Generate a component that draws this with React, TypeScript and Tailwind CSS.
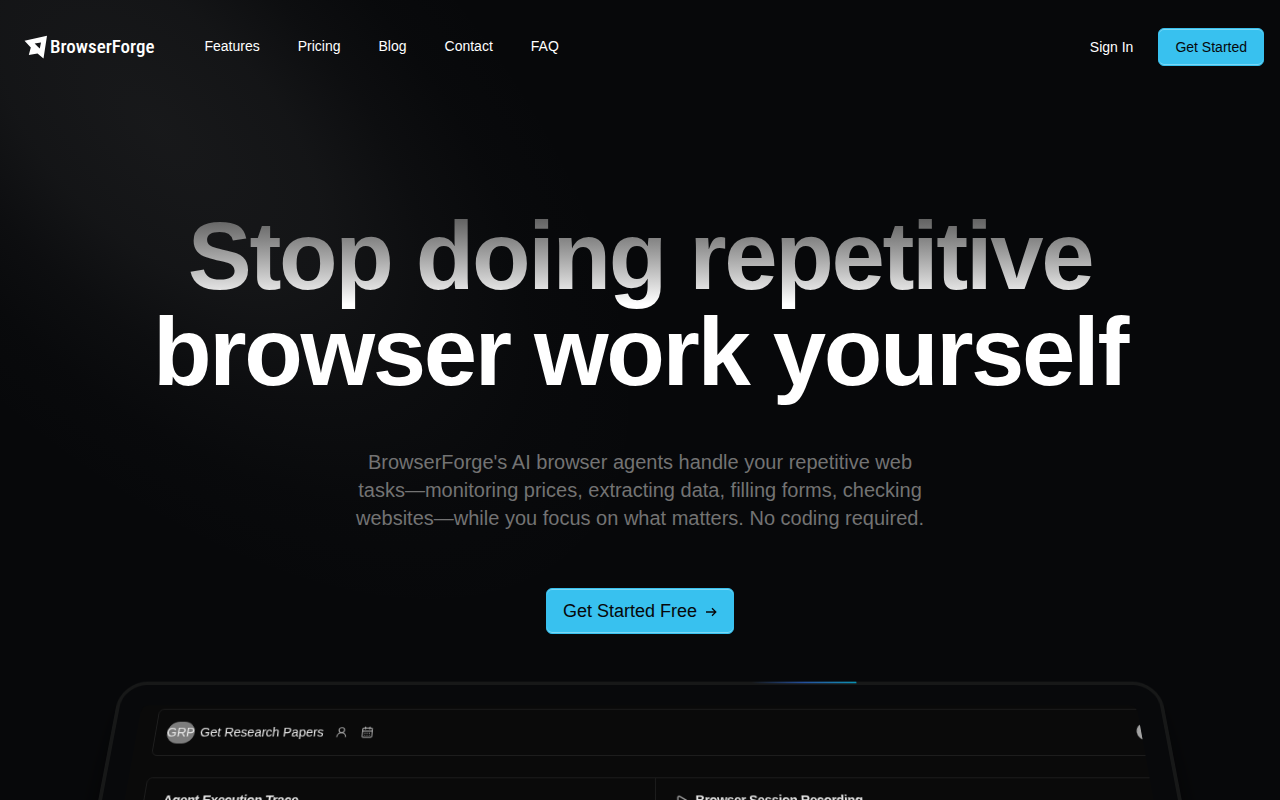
import React from "react";
import { CalendarDays, Play, UserRound } from "lucide-react";

const navLinks = ["Features", "Pricing", "Blog", "Contact", "FAQ"];

function Logo() {
  return (
    <a href="#" className="flex items-center gap-0.5 text-white">
      <svg viewBox="0 0 24 24" className="size-6" aria-hidden="true">
        <path
          fill="currentColor"
          fillRule="evenodd"
          d="M0.5 5.8 L23 0.8 L19.5 23.5 L13.5 18.5 L4.8 20 L6.8 12.5 Z M10.6 8.6 L17 7.4 L15.8 13.6 L13.6 11.6 Z"
        />
      </svg>
      <span className="font-['Roboto_Condensed','Liberation_Sans_Narrow',sans-serif] text-[19px] leading-6 font-medium">
        BrowserForge
      </span>
    </a>
  );
}

function ArrowIcon() {
  return (
    <svg
      viewBox="0 0 12 12"
      className="size-3"
      fill="none"
      stroke="currentColor"
      strokeWidth="1.3"
      aria-hidden="true"
    >
      <path d="M1 7h9.6M7 3.2 10.8 7 7 10.8" />
    </svg>
  );
}

function Header() {
  return (
    <header className="relative flex items-center justify-between pt-7 pr-4 pl-6">
      <div className="flex items-center gap-[34px]">
        <Logo />
        <nav className="flex gap-1.5 pb-0.5">
          {navLinks.map((link) => (
            <a key={link} href="#" className="px-4 text-sm leading-5 text-white">
              {link}
            </a>
          ))}
        </nav>
      </div>
      <div className="flex items-center gap-[9px]">
        <a href="#" className="px-4 text-sm text-white">
          Sign In
        </a>
        <button
          type="button"
          className="rounded-md border border-[#38c1ef] bg-[#38c1ef] px-4 py-2 text-sm text-[#07080a] shadow-[inset_0_1px_#7ad8f6,inset_0_-1px_#7ad8f6]"
        >
          Get Started
        </button>
      </div>
    </header>
  );
}

function Spotlight() {
  return (
    <div
      aria-hidden="true"
      className="pointer-events-none absolute inset-0 overflow-hidden"
    >
      <div className="absolute top-0 left-0 h-320 w-160 -translate-y-87.5 -rotate-45 bg-[radial-gradient(60%_58%_at_50%_32%,hsla(0,0%,85%,.08)_0,hsla(0,0%,80%,.065)_28%,hsla(0,0%,70%,.035)_46%,hsla(0,0%,55%,.012)_64%,hsla(0,0%,45%,0)_83%)]" />
    </div>
  );
}

function Hero() {
  return (
    <section className="relative flex flex-col items-center px-6 pt-[142px] text-center">
      <h1 className="max-w-5xl bg-linear-to-b from-[#616161] from-5% to-white to-48% bg-clip-text pb-2 text-8xl leading-none font-bold tracking-tight text-balance text-transparent">
        Stop doing repetitive browser work yourself
      </h1>
      <p className="mt-10 max-w-xl text-xl leading-7 text-[#737373]">
        BrowserForge's AI browser agents handle your repetitive web
        tasks—monitoring prices, extracting data, filling forms, checking
        websites—while you focus on what matters. No coding required.
      </p>
      <button
        type="button"
        className="mt-14 flex items-center gap-2 rounded-md border border-[#38c1ef] bg-[#38c1ef] px-4 py-2 text-lg leading-7 text-[#07080a] shadow-[inset_0_1px_#7ad8f6,inset_0_-1px_#7ad8f6]"
      >
        Get Started Free
        <ArrowIcon />
      </button>
    </section>
  );
}

function Workspace() {
  return (
    <div className="flex h-full flex-col gap-6 pt-1 pl-5">
      <div className="flex h-[54px] w-[1104px] shrink-0 items-center rounded-md border border-[#1f1f1f] pr-3.5 pl-3 text-sm text-[#e5e5e5]">
        <span className="flex h-[25px] w-[30px] items-center justify-center overflow-hidden rounded-full bg-[#7d7d7d]">
          GRP
        </span>
        <span className="ml-1.5">Get Research Papers</span>
        <UserRound className="ml-3 size-3.5 text-[#a3a3a3]" />
        <CalendarDays className="ml-3.5 size-3.5 text-[#a3a3a3]" />
        <span className="ml-auto size-5 rounded-full bg-[#a3a3a3]" />
      </div>
      <div className="flex w-[1104px] grow rounded-md border border-[#1c1c1c] text-sm font-bold tracking-tight text-[#e5e5e5]">
        <h2 className="w-[544px] border-r border-[#1c1c1c] px-5 py-3.5">
          Agent Execution Trace
        </h2>
        <h2 className="flex items-start gap-1.5 px-5 py-3.5">
          <Play className="mt-1 size-4 text-[#a3a3a3]" />
          Browser Session Recording
        </h2>
      </div>
    </div>
  );
}

// Product window tilted away from the viewer
function Preview() {
  return (
    <div className="relative mt-[26px] px-16 perspective-[1000px] [perspective-origin:50%_43px]">
      <div className="relative mx-auto h-160 max-w-6xl rotate-x-20 rounded-[30px] border-4 border-[#171818] bg-[#08090b] py-6 pr-[26px] pl-6 shadow-[0_9px_20px_#0000004a,0_37px_37px_#00000042,0_84px_50px_#00000026]">
        <div className="h-full overflow-hidden rounded-lg bg-[#0a0a0a]">
          <Workspace />
        </div>
        <div className="absolute -top-1 right-[332px] h-0.5 w-29 bg-linear-to-r from-transparent via-[#24509c] to-[#0891b2]" />
      </div>
    </div>
  );
}

export default function App() {
  return (
    <main className="relative h-screen overflow-hidden bg-[#07080a] font-['Liberation_Sans',Arial,sans-serif]">
      <Spotlight />
      <Header />
      <Hero />
      <Preview />
    </main>
  );
}
